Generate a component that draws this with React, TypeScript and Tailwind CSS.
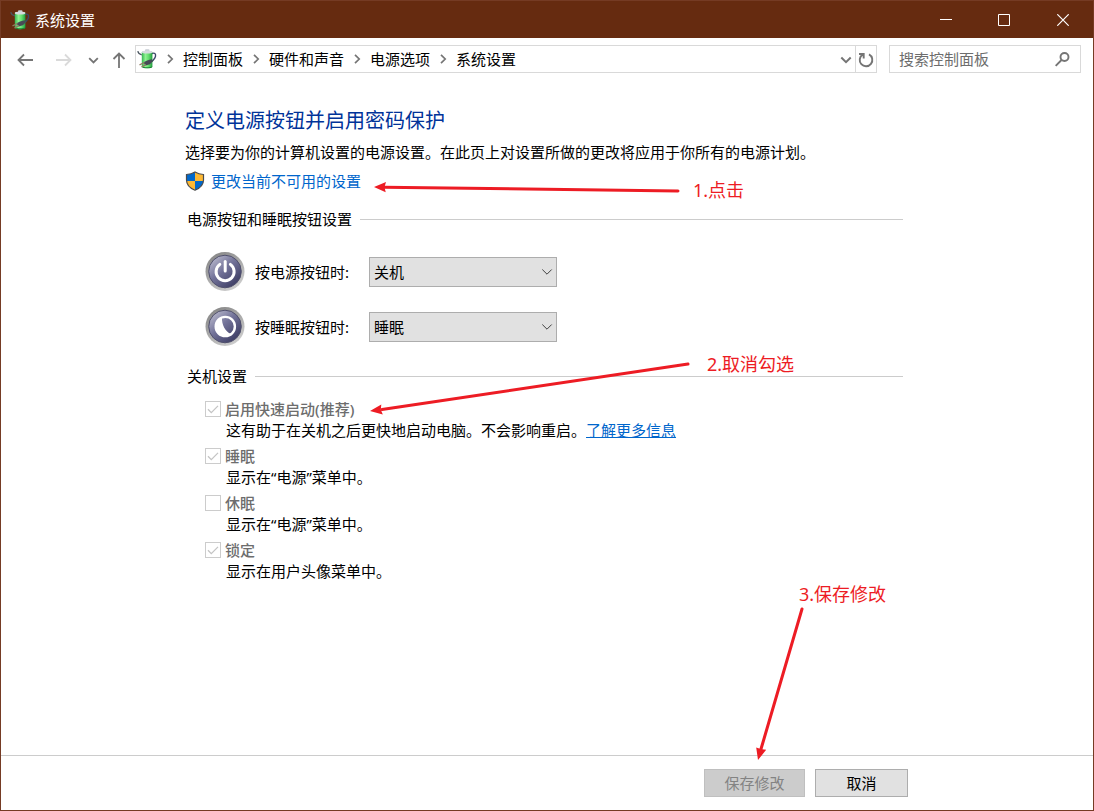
import React from 'react';

const BREADCRUMBS = ['控制面板', '硬件和声音', '电源选项', '系统设置'];

const BUTTON_SETTINGS = [
  { id: 'power', label: '按电源按钮时:', value: '关机', options: ['不采取任何操作', '睡眠', '休眠', '关机'] },
  { id: 'sleep', label: '按睡眠按钮时:', value: '睡眠', options: ['不采取任何操作', '睡眠', '休眠'] },
];

const SHUTDOWN_SETTINGS = [
  { id: 'fast', label: '启用快速启动(推荐)', checked: true, text: '这有助于在关机之后更快地启动电脑。不会影响重启。', more: '了解更多信息' },
  { id: 'standby', label: '睡眠', checked: true, text: '显示在“电源”菜单中。' },
  { id: 'hibernate', label: '休眠', checked: false, text: '显示在“电源”菜单中。' },
  { id: 'lock', label: '锁定', checked: true, text: '显示在用户头像菜单中。' },
];

function BatteryIcon({ className }: { className: string }) {
  return (
    <svg viewBox="0 0 20 20" className={className} aria-hidden="true">
      <defs>
        <linearGradient id="cell" x1="0" x2="1">
          <stop offset="0" stopColor="#35b552" />
          <stop offset=".35" stopColor="#8ff291" />
          <stop offset=".65" stopColor="#62dc6c" />
          <stop offset="1" stopColor="#229b40" />
        </linearGradient>
      </defs>
      <path d="M.8 2.2c.4 2.400 1.600 3.200 4 3.600" fill="none" stroke="#4a5560" strokeWidth="1.200" />
      <path d="M15 4.600c2.500-1.300 4 .2 3.500 2.800-.4 2.200-2 3.200-3.700 5.200" fill="none" stroke="#3d4668" strokeWidth="1.400" />
      <rect x="8" y=".2" width="4.500" height="2.400" rx="1" fill="#c6ccd2" />
      <path d="M4.800 3.600c0-2 10.600-2 10.600 0v14c0 2.200-10.600 2.200-10.600 0z" fill="url(#cell)" />
      <ellipse cx="10.100" cy="3.100" rx="5.300" ry="1.500" fill="#d5dade" />
      <path d="M5 17.400c2 1.100 8.200 1.100 10.400 0v.4c0 2-10.400 2-10.400 0z" fill="#1b8735" />
      <path d="M6.500 13.600c1.800-1.500 5-3.100 8.500-3.400l.9 2-3 3-4.400 1.200z" fill="#474a56" />
      <path d="M7.500 13.500 2.500 15.800M9 15.700 4.500 17.800" stroke="#8f7d62" strokeWidth="1.300" />
    </svg>
  );
}

function ShieldIcon() {
  return (
    <svg viewBox="0 0 20 20" className="size-5 shrink-0" aria-hidden="true">
      <defs>
        <clipPath id="shield">
          <path d="M10 1C7.500 2.600 4.500 3.400 1.500 3.500v5.500c0 4.500 3.500 8.200 8.500 10.200 5-2 8.500-5.700 8.500-10.200V3.500C15.500 3.400 12.500 2.600 10 1z" />
        </clipPath>
      </defs>
      <g clipPath="url(#shield)">
        <path d="M0 0h10v10H0zM10 10h10v10H10z" fill="#0068cc" />
        <path d="M10 0h10v10H10zM0 10h10v10H0z" fill="#fdb833" />
      </g>
      <path d="M10 1C7.500 2.600 4.500 3.400 1.500 3.500v5.500c0 4.500 3.500 8.200 8.500 10.200 5-2 8.500-5.700 8.500-10.200V3.500C15.500 3.400 12.500 2.600 10 1z" fill="none" stroke="#4b4b4b" strokeWidth="1.200" />
    </svg>
  );
}

function RoundIcon({ kind }: { kind: string }) {
  return (
    <svg viewBox="0 0 40 40" className="size-10 shrink-0" aria-hidden="true">
      <defs>
        <linearGradient id="rim" x1=".2" y1="0" x2=".8" y2="1">
          <stop offset="0" stopColor="#858585" />
          <stop offset="1" stopColor="#d2d2d2" />
        </linearGradient>
        <linearGradient id="face" x1=".15" y1=".1" x2=".8" y2=".85">
          <stop offset="0" stopColor="#b3b3c8" />
          <stop offset=".45" stopColor="#74749a" />
          <stop offset="1" stopColor="#43436a" />
        </linearGradient>
      </defs>
      <circle cx="20" cy="19.500" r="19.500" fill="url(#rim)" />
      <circle cx="20" cy="19.500" r="16.300" fill="url(#face)" stroke="#50506c" strokeWidth="1" />
      {kind === 'power' ? (
        <g fill="none" stroke="#fff" strokeWidth="3" strokeLinecap="round">
          <path d="M14.800 12.400a9 9 0 1 0 10.600 0" />
          <path d="M20.200 9.500v9.500" />
        </g>
      ) : (
        <g>
          <circle cx="20.300" cy="19.500" r="9.600" fill="none" stroke="#fff" strokeWidth="2.400" />
          <path d="M17 10.500a9.600 9.600 0 1 0 9 16.500C20.500 25 16.500 17.500 17 10.500z" fill="#fff" />
        </g>
      )}
    </svg>
  );
}

function Chevron({ className }: { className: string }) {
  return (
    <svg viewBox="0 0 12 12" className={className} fill="none" stroke="currentColor" aria-hidden="true">
      <path d="m1.300 3.500 4.700 4.700 4.700-4.700" />
    </svg>
  );
}

function TitleBar() {
  return (
    <header className="flex h-[37px] shrink-0 items-center bg-[#662b10] text-white">
      <BatteryIcon className="ml-[9px] size-5" />
      <h1 className="ml-[5px] flex-1 leading-6">系统设置</h1>
      <button type="button" aria-label="最小化" className="flex h-full w-[58px] items-center justify-center">
        <svg viewBox="0 0 12 12" className="size-3" stroke="currentColor"><path d="M0 5.500h12" /></svg>
      </button>
      <button type="button" aria-label="最大化" className="flex h-full w-[58px] items-center justify-center">
        <svg viewBox="0 0 12 12" className="size-3" fill="none" stroke="currentColor"><path d="M.5.5h11v11H.5z" /></svg>
      </button>
      <button type="button" aria-label="关闭" className="flex h-full w-[60px] items-center justify-center">
        <svg viewBox="0 0 12 12" className="size-3" stroke="currentColor" strokeWidth="1.200"><path d="m.3.3 11.400 11.400M11.700.3.3 11.700" /></svg>
      </button>
    </header>
  );
}

function AddressBar() {
  return (
    <div className="flex pt-[7px] pr-3">
      <nav aria-label="导航" className="flex w-[134px] shrink-0 items-center pt-[2px] pl-4 text-[#757575]">
        <button type="button" aria-label="后退">
          <svg viewBox="0 0 16 16" className="size-4" fill="none" stroke="currentColor" strokeWidth="1.800"><path d="M16 8H1.500M7 2.500 1.500 8 7 13.500" /></svg>
        </button>
        <button type="button" aria-label="前进" disabled className="ml-[23px] text-[#dadada]">
          <svg viewBox="0 0 16 16" className="size-4" fill="none" stroke="currentColor" strokeWidth="1.800"><path d="M0 8h14.500M9 2.500 14.500 8 9 13.500" /></svg>
        </button>
        <button type="button" aria-label="最近位置" className="ml-4">
          <Chevron className="size-[11px] stroke-2" />
        </button>
        <button type="button" aria-label="向上" className="ml-3">
          <svg viewBox="0 0 16 16" className="size-4" fill="none" stroke="currentColor" strokeWidth="1.800"><path d="M8 16V1.500M2.500 7 8 1.500 13.500 7" /></svg>
        </button>
      </nav>
      <div className="flex h-7 flex-1 items-center border border-[#d9d9d9]">
        <BatteryIcon className="ml-px size-5" />
        <ol className="flex flex-1 items-center">
          {BREADCRUMBS.map((crumb) => (
            <li key={crumb} className="flex items-center">
              <svg viewBox="0 0 10 10" className="mx-2 size-[10px] text-[#757575]" fill="none" stroke="currentColor" strokeWidth="1.700" aria-hidden="true">
                <path d="m3 .8 4.200 4.200L3 9.200" />
              </svg>
              <a href="#" className="leading-6">{crumb}</a>
            </li>
          ))}
        </ol>
        <button type="button" aria-label="上一个位置" className="px-[3px] pt-[2px] text-[#757575]">
          <Chevron className="size-3 stroke-2" />
        </button>
        <button type="button" aria-label="刷新" className="flex h-full w-[21px] items-center justify-center border-l border-[#d9d9d9] pt-px text-[#757575]">
          <svg viewBox="0 0 16 16" className="size-4" fill="none" stroke="currentColor" strokeWidth="1.900">
            <path d="M11 2.400a6.300 6.300 0 1 1-6.300.2M1 2H5.700v4.500" />
          </svg>
        </button>
      </div>
      <div className="ml-3 flex h-7 w-48 items-center border border-[#d9d9d9]">
        <input type="search" aria-label="搜索控制面板" placeholder="搜索控制面板" className="w-0 flex-1 pl-[9px] leading-6 outline-none placeholder:text-[#6d6d6d]" />
        <svg viewBox="0 0 16 16" className="mr-[10px] size-4" fill="none" stroke="#757575" strokeWidth="1.900" aria-hidden="true">
          <circle cx="10.500" cy="6" r="4" />
          <path d="M7.500 9 1.700 14.800" />
        </svg>
      </div>
    </div>
  );
}

function SectionTitle({ children }: { children: React.ReactNode }) {
  return (
    <div className="ml-[2px] flex items-center gap-2">
      <h3 className="leading-6">{children}</h3>
      <div className="h-px flex-1 bg-[#cccccc]" />
    </div>
  );
}

// Red arrows with numbered steps, floating over the window
function Annotations() {
  return (
    <div className="pointer-events-none absolute -top-px -left-px h-[811px] w-[1094px] text-lg leading-6 text-[#ed1c24]">
      <svg viewBox="0 0 1094 811" className="absolute inset-0 size-full" fill="#ed1c24" stroke="#ed1c24" strokeWidth="3" strokeLinecap="round" aria-hidden="true">
        <path d="M384 187.200 678 191M382 409.500 688 364M802 609 761 749" fill="none" />
        <path stroke="none" d="M374 187l12-5-1.500 5 1.200 5.200zM370 411l11.300-6.600-.5 5.400 2 4.700zM758 760l-1.800-12.600 4.600 1.600 5.400.8z" />
      </svg>
      <span className="absolute top-[178px] left-[693px]">1.点击</span>
      <span className="absolute top-[352px] left-[707px]">2.取消勾选</span>
      <span className="absolute top-[582px] left-[799px]">3.保存修改</span>
    </div>
  );
}

export default function App() {
  return (
    <div className="relative flex min-h-screen flex-col border border-[#753b24] bg-white font-['Noto_Sans','Noto_Sans_CJK_SC',sans-serif] text-[15px] text-black" lang="zh-CN">
      <TitleBar />
      <AddressBar />

      <main className="flex-1 pt-[34px] pr-[190px] pl-[184px]">
        <h2 className="text-xl leading-7 text-[#003399]">定义电源按钮并启用密码保护</h2>
        <p className="mt-[5px] leading-6">选择要为你的计算机设置的电源设置。在此页上对设置所做的更改将应用于你所有的电源计划。</p>
        <a href="#" className="mt-[5px] flex w-fit items-center gap-[6px] leading-6 text-[#0066cc]">
          <ShieldIcon />
          更改当前不可用的设置
        </a>

        <section className="mt-[14px]">
          <SectionTitle>电源按钮和睡眠按钮设置</SectionTitle>
          <div className="mt-[21px] ml-5 flex flex-col gap-[15px]">
            {BUTTON_SETTINGS.map((row) => (
              <div key={row.id} className="flex items-center">
                <RoundIcon kind={row.id} />
                <label htmlFor={row.id} className="ml-[10px] w-[114px] leading-6">{row.label}</label>
                <div className="relative">
                  <select id={row.id} defaultValue={row.value} className="h-[30px] w-[188px] appearance-none border border-[#adadad] bg-[#e1e1e1] pl-1 leading-6">
                    {row.options.map((option) => (
                      <option key={option}>{option}</option>
                    ))}
                  </select>
                  <Chevron className="pointer-events-none absolute top-[9px] right-1 size-3 text-[#404040]" />
                </div>
              </div>
            ))}
          </div>
        </section>

        <section className="mt-[17px]">
          <SectionTitle>关机设置</SectionTitle>
          <ul className="mt-[10px] ml-5 flex flex-col gap-1">
            {SHUTDOWN_SETTINGS.map((item) => (
              <li key={item.id}>
                <div className="flex items-center gap-1">
                  <span className="relative size-4">
                    <input id={item.id} type="checkbox" defaultChecked={item.checked} disabled className="block size-4 appearance-none border border-[#cccccc] bg-white" />
                    {item.checked && (
                      <svg viewBox="0 0 16 16" className="absolute inset-0 size-4" fill="none" stroke="#c4c4c4" strokeWidth="1.300" aria-hidden="true">
                        <path d="m3 8.300 3.300 3.300L13 4.900" />
                      </svg>
                    )}
                  </span>
                  <label htmlFor={item.id} className="leading-[22px] font-medium text-[#6d6d6d]">{item.label}</label>
                </div>
                <p className="ml-[21px] leading-[21px]">
                  {item.text}
                  {item.more && <a href="#" className="text-[#0066cc] underline">{item.more}</a>}
                </p>
              </li>
            ))}
          </ul>
        </section>
      </main>

      <footer className="flex h-[55px] shrink-0 justify-end gap-[10px] border-t border-[#cccccc] pt-[13px] pr-[185px]">
        <button type="button" disabled className="h-7 w-[101px] border border-[#bfbfbf] bg-[#cccccc] text-[#838383]">保存修改</button>
        <button type="button" className="h-7 w-[93px] border border-[#adadad] bg-[#e1e1e1]">取消</button>
      </footer>

      <Annotations />
    </div>
  );
}
